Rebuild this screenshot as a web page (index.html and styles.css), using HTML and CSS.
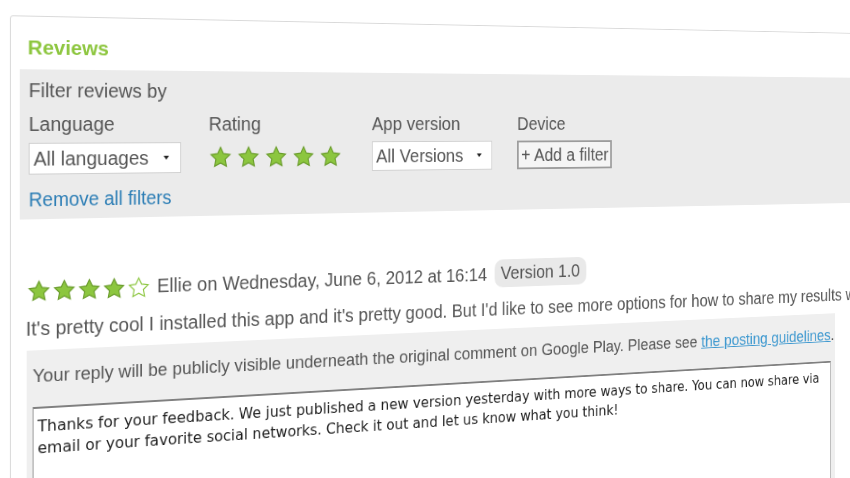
FILE: index.html
```html
<!DOCTYPE html>
<html lang="en">
<head>
    <meta charset="UTF-8">
    <title>Reviews</title>
    <link rel="stylesheet" href="styles.css">
</head>
<body>
    <svg class="defs" width="0" height="0">
        <defs>
            <symbol id="star" viewBox="0 0 24 24">
                <polygon points="12,1.6 15.2,8.2 22.4,9.1 17.1,14.1 18.5,21.4 12,17.9 5.5,21.4 6.9,14.1 1.6,9.1 8.8,8.2"/>
            </symbol>
        </defs>
    </svg>

    <div class="stage">
        <div class="card">
            <h2 class="title">Reviews</h2>

            <div class="filters">
                <div class="filters-head">Filter reviews by</div>
                <div class="filter-row">
                    <div class="filter filter-lang">
                        <div class="label">Language</div>
                        <div class="select select-lang"><span>All languages</span><span class="caret"></span></div>
                    </div>
                    <div class="filter filter-rating">
                        <div class="label">Rating</div>
                        <div class="stars stars-big">
                            <svg class="star"><use href="#star"/></svg>
                            <svg class="star"><use href="#star"/></svg>
                            <svg class="star"><use href="#star"/></svg>
                            <svg class="star"><use href="#star"/></svg>
                            <svg class="star"><use href="#star"/></svg>
                        </div>
                    </div>
                    <div class="filter filter-version">
                        <div class="label">App version</div>
                        <div class="select select-version"><span>All Versions</span><span class="caret"></span></div>
                    </div>
                    <div class="filter">
                        <div class="label">Device</div>
                        <div class="add-filter">+ Add a filter</div>
                    </div>
                </div>
                <a class="remove" href="#">Remove all filters</a>
            </div>

            <div class="review">
                <div class="review-head">
                    <div class="stars stars-small">
                        <svg class="star"><use href="#star"/></svg>
                        <svg class="star"><use href="#star"/></svg>
                        <svg class="star"><use href="#star"/></svg>
                        <svg class="star"><use href="#star"/></svg>
                        <svg class="star empty"><use href="#star"/></svg>
                    </div>
                    <span class="author">Ellie on Wednesday, June 6, 2012 at 16:14</span>
                    <span class="version">Version 1.0</span>
                </div>
                <p class="comment">It's pretty cool I installed this app and it's pretty good. But I'd like to see more options for how to share my results with friends.</p>

                <div class="reply">
                    <p class="reply-note">Your reply will be publicly visible underneath the original comment on Google Play. Please see <a href="#">the posting guidelines</a>.</p>
                    <textarea class="reply-box">Thanks for your feedback. We just published a new version yesterday with more ways to share. You can now share via email or your favorite social networks. Check it out and let us know what you think!</textarea>
                </div>
            </div>
        </div>
    </div>
</body>
</html>
```

FILE: styles.css
```css
* {
    margin: 0;
    padding: 0;
    box-sizing: border-box;
}

html, body {
    width: 100%;
    height: 100%;
    overflow: hidden;
    background: #fff;
}

body {
    font-family: "Liberation Sans", Arial, sans-serif;
    color: #555;
}

.defs {
    position: absolute;
}

/* the whole page is shown tilted away to the right */
.stage {
    width: 1280px;
    height: 600px;
    padding: 15px 0 0 10px;
    transform-origin: 0 120px;
    transform: perspective(525px) rotateY(6deg);
}

.card {
    width: 1260px;
    height: 585px;
    background: #fff;
    border: 1px solid #d9d9d9;
    border-radius: 3px;
    padding: 19px 0 0 9px;
}

.title {
    margin: 0 0 10px 8px;
    font-size: 21px;
    line-height: 24px;
    font-weight: bold;
    color: #8dc63f;
}

.filters {
    background: #ebebeb;
    padding: 9px 9px 8px;
}

.filters-head {
    font-size: 20px;
    line-height: 24px;
    margin-bottom: 10px;
}

.filter-row {
    display: flex;
}

.filter-lang {
    width: 190px;
}

.filter-rating {
    width: 185px;
}

.filter-version {
    width: 176px;
}

.label {
    font-size: 20px;
    line-height: 24px;
    margin-bottom: 7px;
}

.select {
    display: flex;
    align-items: center;
    justify-content: space-between;
    height: 32px;
    background: #fff;
    border: 1px solid #d0d0d0;
    padding: 0 12px 0 4px;
    font-size: 20px;
    color: #555;
}

.select-lang {
    width: 160px;
}

.select-version {
    width: 145px;
}

.caret {
    width: 0;
    height: 0;
    border-left: 3px solid transparent;
    border-right: 3px solid transparent;
    border-top: 4px solid #222;
}

.add-filter {
    display: flex;
    align-items: center;
    width: 121px;
    height: 32px;
    padding-left: 3px;
    background: #f5f5f5;
    border: 2px solid #9c9c9c;
    font-size: 20px;
    color: #555;
    white-space: nowrap;
}

.stars {
    display: flex;
    align-items: center;
}

.star {
    fill: #8cc63f;
    stroke: #6a9c2c;
    stroke-width: 1.2;
}

.star.empty {
    fill: #fff;
    stroke: #8cc63f;
}

.stars-big {
    height: 32px;
    gap: 7px;
    margin-left: 1px;
}

.stars-big .star {
    width: 24px;
    height: 24px;
}

.remove {
    display: block;
    margin-top: 13px;
    font-size: 19.5px;
    line-height: 24px;
    color: #2b7db5;
    text-decoration: none;
}

.review {
    margin-top: 55px;
    padding-left: 6px;
}

.review-head {
    display: flex;
    align-items: center;
    height: 31px;
}

.stars-small {
    gap: 3px;
    margin: 4px 0 0 2px;
}

.stars-small .star {
    width: 23px;
    height: 23px;
}

.author {
    margin: 2px 0 0 8px;
    font-size: 20px;
}

.version {
    margin-left: 9px;
    height: 31px;
    line-height: 31px;
    padding: 0 8px;
    background: #e9e9e9;
    border-radius: 10px;
    font-size: 20px;
}

.comment {
    margin-top: 12px;
    font-size: 20px;
    line-height: 24px;
    white-space: nowrap;
}

.reply {
    width: 981px;
    height: 260px;
    margin: 10px 0 0 1px;
    padding: 14px 6px 0;
    background: #efefef;
}

.reply-note {
    font-size: 18.8px;
    line-height: 24px;
    white-space: nowrap;
}

.reply-note a {
    color: #3b97cf;
}

.reply-box {
    display: block;
    width: 969px;
    height: 220px;
    margin-top: 19px;
    padding: 7px 4px;
    background: #fff;
    border: 1px solid #b8b8b8;
    border-top: 2px solid #808080;
    border-left-color: #999;
    font-family: "DejaVu Sans", Verdana, sans-serif;
    font-size: 16px;
    line-height: 22px;
    color: #1e1e1e;
    resize: none;
    outline: none;
}
```
